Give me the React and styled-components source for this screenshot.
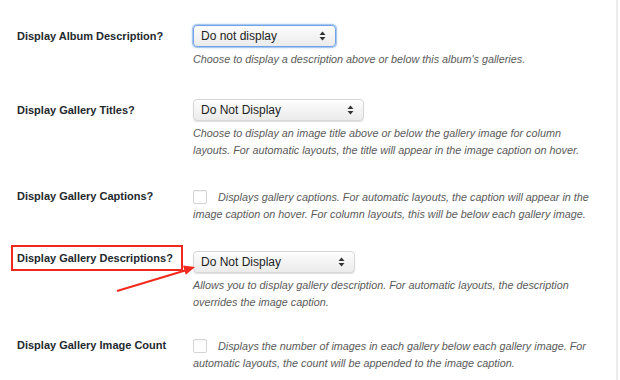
import React from "react"
import styled, { createGlobalStyle, css } from "styled-components"

const GlobalStyle = createGlobalStyle`
  html, body {
    margin: 0;
    padding: 0;
    background: #fff;
  }
  body {
    font-family: "Liberation Sans", Arial, sans-serif;
    color: #23282d;
  }
`

const settings = [
  {
    label: "Display Album Description?",
    type: "select",
    value: "Do not display",
    width: 143,
    focused: true,
    top: 25,
    help: "Choose to display a description above or below this album's galleries.",
  },
  {
    label: "Display Gallery Titles?",
    type: "select",
    value: "Do Not Display",
    width: 171,
    top: 31,
    help: "Choose to display an image title above or below the gallery image for column layouts. For automatic layouts, the title will appear in the image caption on hover.",
  },
  {
    label: "Display Gallery Captions?",
    type: "checkbox",
    top: 26,
    help: "Displays gallery captions. For automatic layouts, the caption will appear in the image caption on hover. For column layouts, this will be below each gallery image.",
  },
  {
    label: "Display Gallery Descriptions?",
    type: "select",
    value: "Do Not Display",
    width: 162,
    highlighted: true,
    top: 28,
    help: "Allows you to display gallery description. For automatic layouts, the description overrides the image caption.",
  },
  {
    label: "Display Gallery Image Count",
    type: "checkbox",
    top: 23,
    help: "Displays the number of images in each gallery below each gallery image. For automatic layouts, the count will be appended to the image caption.",
  },
]

const SortArrows = () => (
  <svg width="7" height="10" viewBox="0 0 7 10">
    <path d="M3.5 0.5 L6.5 4 L0.5 4 Z" fill="#333" />
    <path d="M3.5 9.5 L6.5 6 L0.5 6 Z" fill="#333" />
  </svg>
)

const Arrow = () => (
  <ArrowLayer width="90" height="40" viewBox="0 0 90 40">
    <line x1="3" y1="26" x2="72" y2="5.2" stroke="#f2291c" strokeWidth="2" />
    <path d="M81 2 L71.8 9.8 L69 0.6 Z" fill="#f2291c" />
  </ArrowLayer>
)

export default function App() {
  return (
    <>
      <GlobalStyle />
      <Page>
        {settings.map(item => (
          <Row key={item.label} top={item.top}>
            <LabelCell>
              <Label highlighted={item.highlighted} boxed={item.type === "select"}>
                {item.label}
              </Label>
            </LabelCell>
            <Field>
              {item.type === "select" ? (
                <>
                  <Select width={item.width} focused={item.focused}>
                    <span>{item.value}</span>
                    <SortArrows />
                  </Select>
                  <Help>{item.help}</Help>
                </>
              ) : (
                <Help>
                  <Checkbox />
                  {item.help}
                </Help>
              )}
            </Field>
            {item.highlighted && <Arrow />}
          </Row>
        ))}
      </Page>
    </>
  )
}

const Page = styled.div`
  width: 618px;
  height: 380px;
  border-right: 2px solid #ececec;
  box-sizing: border-box;
  overflow: hidden;
`

const Row = styled.div`
  position: relative;
  display: grid;
  grid-template-columns: 176px 400px;
  padding-left: 17px;
  margin-top: ${p => p.top}px;
`

const LabelCell = styled.div`
  display: flex;
  align-items: flex-start;
`

const Label = styled.div`
  font-size: 11px;
  font-weight: bold;
  color: #23282d;
  white-space: nowrap;
  line-height: ${p => (p.boxed ? "22px" : "17px")};
  margin-top: ${p => (p.boxed ? "0" : "3px")};

  ${p =>
    p.highlighted &&
    css`
      border: 2px solid #ee2a1e;
      margin: -6px 0 0 -6px;
      padding: 0 8px 0 4px;
      line-height: 22px;
    `}
`

const Field = styled.div`
  display: flex;
  flex-direction: column;
  align-items: flex-start;
`

const Select = styled.div`
  box-sizing: border-box;
  width: ${p => p.width}px;
  height: 22px;
  display: flex;
  align-items: center;
  justify-content: space-between;
  padding: 0 9px 0 7px;
  border-radius: 4px;
  font-size: 12px;
  color: #1d1d1d;
  background: linear-gradient(#fdfdfd, #ebebeb);
  border: 1px solid #d6d6d6;
  box-shadow: 0 1px 1px rgba(0, 0, 0, 0.12);

  ${p =>
    p.focused &&
    css`
      border: 1px solid #6fa2e6;
      box-shadow: 0 0 0 1px #a9c8f0, 0 0 3px rgba(70, 130, 220, 0.6);
    `}
`

const Help = styled.p`
  margin: 4px 0 0;
  font-size: 10.8px;
  font-style: italic;
  line-height: 17px;
  color: #5a5a5a;
`

const Checkbox = styled.span`
  display: inline-block;
  box-sizing: border-box;
  width: 14px;
  height: 14px;
  margin: 0 11px -3px 0;
  border: 1px solid #d4d4d4;
  border-radius: 2px;
  background: #fff;
  box-shadow: inset 0 1px 1px rgba(0, 0, 0, 0.05);
`

const ArrowLayer = styled.svg`
  position: absolute;
  left: 114px;
  top: 14px;
  pointer-events: none;
`
